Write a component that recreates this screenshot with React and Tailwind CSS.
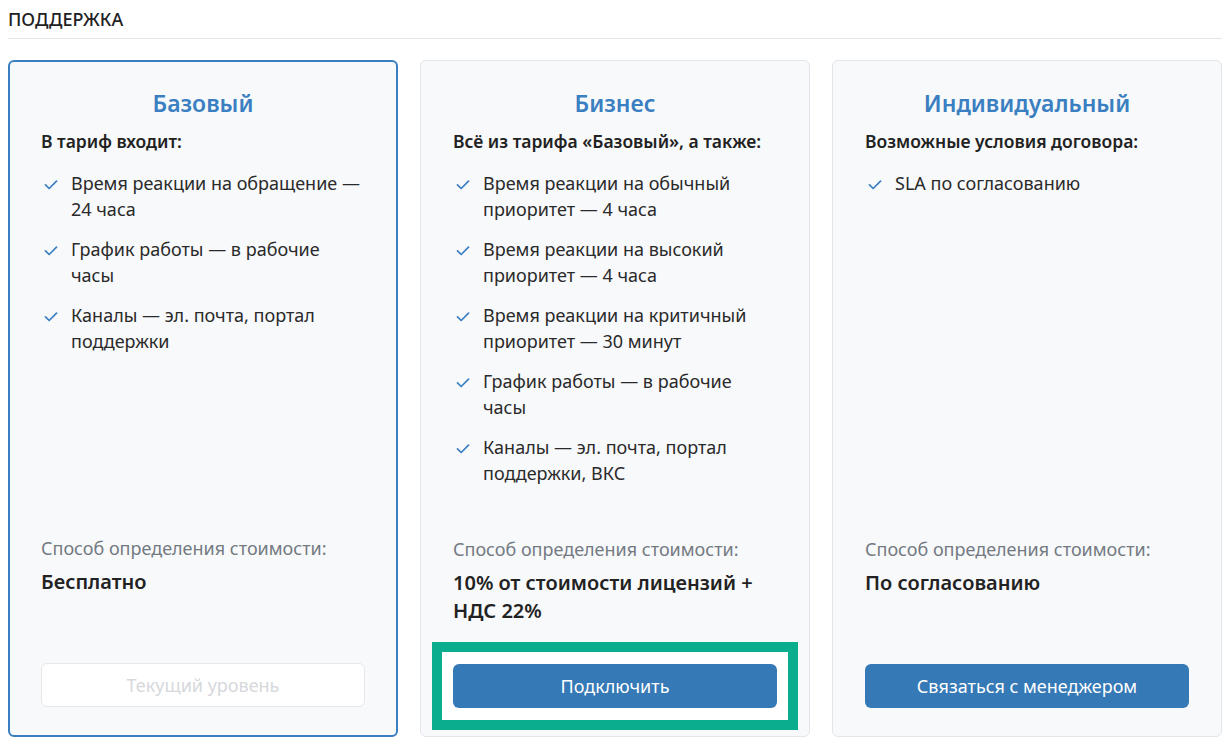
const FONT = "font-['Noto_Sans',sans-serif]";

const PLANS = [
  {
    key: "basic",
    title: "Базовый",
    intro: "В тариф входит:",
    items: [
      "Время реакции на обращение — 24 часа",
      "График работы — в рабочие часы",
      "Каналы — эл. почта, портал поддержки",
    ],
    price: "Бесплатно",
    action: "Текущий уровень",
    current: true,
  },
  {
    key: "business",
    title: "Бизнес",
    intro: "Всё из тарифа «Базовый», а также:",
    items: [
      "Время реакции на обычный приоритет — 4 часа",
      "Время реакции на высокий приоритет — 4 часа",
      "Время реакции на критичный приоритет — 30 минут",
      "График работы — в рабочие часы",
      "Каналы — эл. почта, портал поддержки, ВКС",
    ],
    price: "10% от стоимости лицензий + НДС 22%",
    action: "Подключить",
    highlighted: true,
  },
  {
    key: "custom",
    title: "Индивидуальный",
    intro: "Возможные условия договора:",
    items: ["SLA по согласованию"],
    price: "По согласованию",
    action: "Связаться с менеджером",
  },
];

const Check = () => (
  <svg
    viewBox="0 0 14 10"
    className="mt-[10px] h-[10px] w-[14px] shrink-0 text-[#3a7fc1]"
    fill="none"
    stroke="currentColor"
    strokeWidth="1.7"
    strokeLinecap="round"
    strokeLinejoin="round"
  >
    <path d="M1.5 4.8 5.2 8.5 12.5 1.2" />
  </svg>
);

function PlanCard({ plan }) {
  const button = plan.current ? (
    <button
      type="button"
      disabled
      className="h-[44px] w-full rounded-md border border-[#e5e7eb] bg-white text-[18px] text-[#d6d8dc]"
    >
      {plan.action}
    </button>
  ) : (
    <button
      type="button"
      className="h-[44px] w-full rounded-md bg-[#3579b6] text-[18px] text-white"
    >
      {plan.action}
    </button>
  );

  return (
    <div
      className={`flex h-[677px] flex-col rounded-md bg-[#f8f9fb] pb-[28px] ${
        plan.current
          ? "border-2 border-[#3a7fc1] px-[31px] pt-[26px]"
          : "border border-[#e2e5ea] px-[32px] pt-[27px]"
      }`}
    >
      <h2 className="text-center text-[23px] font-semibold leading-[30px] text-[#3a7fc1]">
        {plan.title}
      </h2>
      <p className="mt-[11px] text-[17.5px] font-semibold leading-[24px] text-[#222]">
        {plan.intro}
      </p>
      <ul className="mt-[17px] flex flex-1 flex-col gap-[14px]">
        {plan.items.map((item) => (
          <li key={item} className="flex gap-[13px] pl-[3px] text-[18px] leading-[26px] text-[#2a2a2a]">
            <Check />
            <span>{item}</span>
          </li>
        ))}
      </ul>
      <div className="h-[128px]">
        <p className="text-[18px] leading-[26px] text-[#737a82]">
          Способ определения стоимости:
        </p>
        <p className="mt-[7px] text-[20px] font-semibold leading-[28px] text-[#222]">
          {plan.price}
        </p>
      </div>
      {plan.highlighted ? (
        <div className="-mx-[21px] -my-[22px] border-[10px] border-[#0aae8e] bg-white px-[11px] py-[12px]">
          {button}
        </div>
      ) : (
        button
      )}
    </div>
  );
}

export default function App() {
  return (
    <main className={`min-h-screen bg-white px-[8px] pt-[8px] ${FONT}`}>
      <h1 className="pb-[8px] text-[18px] font-medium leading-[22px] text-[#222]">
        ПОДДЕРЖКА
      </h1>
      <div className="border-b border-[#e2e4e8]" />
      <section className="mt-[21px] grid grid-cols-3 gap-[22px]">
        {PLANS.map((plan) => (
          <PlanCard key={plan.key} plan={plan} />
        ))}
      </section>
    </main>
  );
}
